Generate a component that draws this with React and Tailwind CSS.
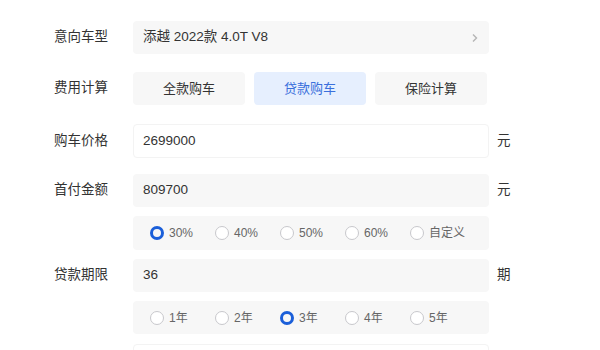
const ratios = ['30%', '40%', '50%', '60%', '自定义'];
const terms = ['1年', '2年', '3年', '4年', '5年'];

function Radio({ label, checked }) {
  return (
    <div className="flex items-center w-[65px] shrink-0">
      {checked ? (
        <span className="w-[14px] h-[14px] rounded-full border-[3px] border-[#1b5fd9] box-border" />
      ) : (
        <span className="w-[14px] h-[14px] rounded-full border border-[#c8c8cc] bg-white box-border" />
      )}
      <span className="ml-[5px] text-[12px] text-[#666]">{label}</span>
    </div>
  );
}

function Row({ label, children, unit, className = '' }) {
  return (
    <div className={`flex items-center ${className}`}>
      <div className="w-[79px] shrink-0 text-[13.5px] text-[#333]">{label}</div>
      <div className="w-[356px] shrink-0">{children}</div>
      {unit && <div className="ml-2 text-[13.5px] text-[#333]">{unit}</div>}
    </div>
  );
}

export default function App() {
  return (
    <div
      className="w-[600px] h-[350px] overflow-hidden bg-white pl-[54px] pt-[21px]"
      style={{ fontFamily: '"Liberation Sans", "Noto Sans CJK SC", sans-serif' }}
    >
      <Row label="意向车型">
        <div className="h-[33px] rounded bg-[#f7f7f7] flex items-center justify-between pl-[10px] pr-[10px] text-[13.5px] text-[#333]">
          <span>添越 2022款 4.0T V8</span>
          <svg width="8" height="10" viewBox="0 0 8 10" fill="none">
            <path d="M2 1.5 L5.5 5 L2 8.5" stroke="#b5b5b5" strokeWidth="1.4" />
          </svg>
        </div>
      </Row>

      <Row label="费用计算" className="mt-[18px]">
        <div className="flex gap-[9px]">
          <div className="w-[112px] h-[33px] rounded bg-[#f7f7f7] flex items-center justify-center text-[13px] text-[#333]">全款购车</div>
          <div className="w-[112px] h-[33px] rounded bg-[#e6effe] flex items-center justify-center text-[13px] text-[#3a6fdc]">贷款购车</div>
          <div className="w-[112px] h-[33px] rounded bg-[#f7f7f7] flex items-center justify-center text-[13px] text-[#333]">保险计算</div>
        </div>
      </Row>

      <Row label="购车价格" unit="元" className="mt-[19px]">
        <div className="h-[34px] rounded border border-[#f3f3f3] bg-white flex items-center pl-[9px] text-[13.5px] text-[#333]">2699000</div>
      </Row>

      <Row label="首付金额" unit="元" className="mt-[16px]">
        <div className="h-[33px] rounded bg-[#f7f7f7] flex items-center pl-[10px] text-[13.5px] text-[#333]">809700</div>
      </Row>

      <Row label="" className="mt-[9px]">
        <div className="h-[34px] rounded bg-[#f7f7f7] flex items-center pl-[17px]">
          {ratios.map((r, i) => (
            <Radio key={r} label={r} checked={i === 0} />
          ))}
        </div>
      </Row>

      <Row label="贷款期限" unit="期" className="mt-[9px]">
        <div className="h-[33px] rounded bg-[#f7f7f7] flex items-center pl-[10px] text-[13.5px] text-[#333]">36</div>
      </Row>

      <Row label="" className="mt-[9px]">
        <div className="h-[33px] rounded bg-[#f7f7f7] flex items-center pl-[17px]">
          {terms.map((t, i) => (
            <Radio key={t} label={t} checked={i === 2} />
          ))}
        </div>
      </Row>

      <Row label="" className="mt-[10px]">
        <div className="h-[33px] rounded border border-[#f3f3f3] bg-white" />
      </Row>
    </div>
  );
}
